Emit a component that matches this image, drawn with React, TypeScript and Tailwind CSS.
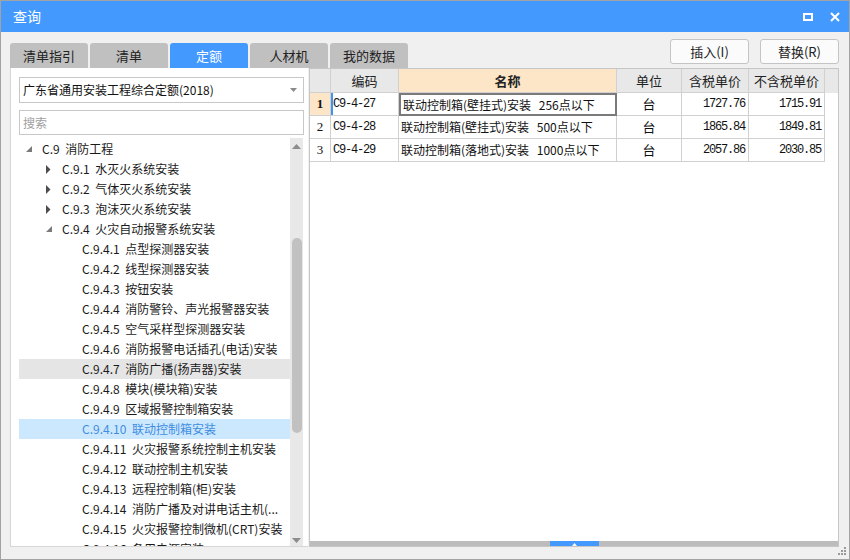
import React from "react";

type Node = { level: 0 | 1 | 2; arrow?: "open" | "closed"; text: string };

const tree: Node[] = [
  { level: 0, arrow: "open", text: "C.9 消防工程" },
  { level: 1, arrow: "closed", text: "C.9.1 水灭火系统安装" },
  { level: 1, arrow: "closed", text: "C.9.2 气体灭火系统安装" },
  { level: 1, arrow: "closed", text: "C.9.3 泡沫灭火系统安装" },
  { level: 1, arrow: "open", text: "C.9.4 火灾自动报警系统安装" },
  { level: 2, text: "C.9.4.1 点型探测器安装" },
  { level: 2, text: "C.9.4.2 线型探测器安装" },
  { level: 2, text: "C.9.4.3 按钮安装" },
  { level: 2, text: "C.9.4.4 消防警铃、声光报警器安装" },
  { level: 2, text: "C.9.4.5 空气采样型探测器安装" },
  { level: 2, text: "C.9.4.6 消防报警电话插孔(电话)安装" },
  { level: 2, text: "C.9.4.7 消防广播(扬声器)安装" },
  { level: 2, text: "C.9.4.8 模块(模块箱)安装" },
  { level: 2, text: "C.9.4.9 区域报警控制箱安装" },
  { level: 2, text: "C.9.4.10 联动控制箱安装" },
  { level: 2, text: "C.9.4.11 火灾报警系统控制主机安装" },
  { level: 2, text: "C.9.4.12 联动控制主机安装" },
  { level: 2, text: "C.9.4.13 远程控制箱(柜)安装" },
  { level: 2, text: "C.9.4.14 消防广播及对讲电话主机(..." },
  { level: 2, text: "C.9.4.15 火灾报警控制微机(CRT)安装" },
  { level: 2, text: "C.9.4.16 备用电源安装" },
];

const indent = { 0: "pl-[6px]", 1: "pl-[26px]", 2: "pl-[46px]" };

const rows = [
  { no: "1", code: "C9-4-27", name: "联动控制箱(壁挂式)安装 256点以下", unit: "台", tax: "1727.76", net: "1715.91" },
  { no: "2", code: "C9-4-28", name: "联动控制箱(壁挂式)安装 500点以下", unit: "台", tax: "1865.84", net: "1849.81" },
  { no: "3", code: "C9-4-29", name: "联动控制箱(落地式)安装 1000点以下", unit: "台", tax: "2057.86", net: "2030.85" },
];

const tabs = ["清单指引", "清单", "定额", "人材机", "我的数据"];

const ui = "font-['Noto_Sans_CJK_SC',sans-serif]";
const mono = "font-['Liberation_Mono','Noto_Sans_CJK_SC',monospace] tracking-[-1.2px]";

const TreeArrow = ({ kind }: { kind?: "open" | "closed" }) => (
  <span className="flex w-[17px] shrink-0 items-center">
    {kind === "open" && (
      <svg width="7" height="7" className="ml-[1px]">
        <polygon points="6,0 6,6 0,6" fill="#7a7a7a" />
      </svg>
    )}
    {kind === "closed" && (
      <svg width="6" height="9" className="ml-[1px]">
        <polygon points="0,0 4.5,4.5 0,9" fill="#4d4d4d" />
      </svg>
    )}
  </span>
);

export default function App() {
  return (
    <div className={`relative flex h-[560px] w-[850px] flex-col border border-[#a3a3a3] bg-[#f0f0f0] ${ui}`}>
      {/* title bar */}
      <div className="flex h-[31px] shrink-0 items-center justify-between bg-[#4499ff] pl-[12px] pr-[9px] text-white">
        <span className="text-[14px]">查询</span>
        <div className="flex items-center gap-[17px]">
          <span className="h-[8px] w-[10px] border-2 border-white" />
          <svg width="10" height="10" viewBox="0 0 10 10">
            <path d="M1 1 L9 9 M9 1 L1 9" stroke="#fff" strokeWidth="2" />
          </svg>
        </div>
      </div>

      {/* tabs + buttons */}
      <div className="flex h-[36px] shrink-0 justify-between pl-[9px] pr-[10px]">
        <div className="flex items-end gap-[2px]">
          {tabs.map((t) => (
            <div
              key={t}
              className={
                t === "定额"
                  ? "flex h-[25px] w-[78px] items-center justify-center rounded-t-[3px] bg-[#4499ff] text-[13px] text-white"
                  : "flex h-[25px] w-[78px] items-center justify-center rounded-t-[3px] bg-[#c0c0c0] text-[13px] text-[#222]"
              }
            >
              {t}
            </div>
          ))}
        </div>
        <div className="flex gap-[11px] pt-[7px]">
          <button className="h-[25px] w-[79px] rounded-[3px] border border-[#c4c4c4] bg-[#fbfbfb] text-[13px] text-[#222]">
            插入(I)
          </button>
          <button className="h-[25px] w-[79px] rounded-[3px] border border-[#c4c4c4] bg-[#fbfbfb] text-[13px] text-[#222]">
            替换(R)
          </button>
        </div>
      </div>

      {/* main */}
      <div className="flex h-[479px] shrink-0 gap-[1px] pl-[9px] pr-[10px]">
        {/* left */}
        <div className="flex w-[298px] flex-col border-b border-l border-[#d6d6d6] bg-white pl-[8px] pt-[9px]">
          <div className="flex h-[26px] w-[285px] items-center justify-between border border-[#c8c8c8] pl-[3px] pr-[6px] text-[12px] text-[#111]">
            <span>广东省通用安装工程综合定额(2018)</span>
            <svg width="7" height="4">
              <polygon points="0,0 7,0 3.5,4" fill="#8a8a8a" />
            </svg>
          </div>
          <div className="mt-[7px] flex h-[25px] w-[285px] items-center border border-[#c8c8c8] pl-[3px] text-[12px] text-[#a0a0a0]">
            搜索
          </div>
          <div className="mt-[3px] flex min-h-0 flex-1">
            <div className="w-[271px] overflow-hidden pt-[1px]">
              {tree.map((n) => {
                const hover = n.text.startsWith("C.9.4.7 ");
                const sel = n.text.startsWith("C.9.4.10 ");
                return (
                  <div
                    key={n.text}
                    className={`flex h-[20px] items-center whitespace-nowrap text-[12px] [word-spacing:3px] ${indent[n.level]} ${
                      sel ? "bg-[#cce8ff] text-[#3f8de0]" : hover ? "bg-[#e5e5e5] text-[#1a1a1a]" : "text-[#1a1a1a]"
                    }`}
                  >
                    <TreeArrow kind={n.arrow} />
                    <span>{n.text}</span>
                  </div>
                );
              })}
            </div>
            <div className="relative w-[13px] bg-[#e8e8e8]">
              <svg width="9" height="5" className="absolute left-[2px] top-[6px]">
                <polygon points="0,5 9,5 4.5,0" fill="#8c8c8c" />
              </svg>
              <div className="absolute left-[2px] top-[100px] h-[195px] w-[10px] rounded-full bg-[#c1c1c1]" />
              <svg width="9" height="5" className="absolute bottom-[3px] left-[2px]">
                <polygon points="0,0 9,0 4.5,5" fill="#8c8c8c" />
              </svg>
            </div>
          </div>
        </div>

        {/* right */}
        <div className="flex w-[530px] flex-col border border-[#c6c6c6] bg-white">
          <div className="flex-1 text-[12px] text-[#111]">
            <div className="flex h-[24px] bg-[#e8e8e8] text-[13px] text-[#222]">
              <div className="w-[21px] border-b border-r border-[#d0d0d0]" />
              <div className="flex w-[68px] items-center justify-center border-b border-r border-[#d0d0d0]">编码</div>
              <div className="flex w-[218px] items-center justify-center border-b border-r border-[#d0d0d0] bg-[#fde6c8] font-bold">
                名称
              </div>
              <div className="flex w-[65px] items-center justify-center border-b border-r border-[#d0d0d0]">单位</div>
              <div className="flex w-[67px] items-center justify-center border-b border-r border-[#d0d0d0]">含税单价</div>
              <div className="flex w-[76px] items-center justify-center border-b border-r border-[#d0d0d0]">不含税单价</div>
            </div>
            {rows.map((r, i) => {
              const active = i === 0;
              return (
                <div key={r.no} className="flex h-[23px]">
                  <div
                    className={`flex w-[21px] items-center justify-center border-b border-r border-[#d0d0d0] font-['Liberation_Serif',serif] text-[13px] ${
                      active ? "bg-[#fde6c8] font-bold" : ""
                    }`}
                  >
                    {r.no}
                  </div>
                  <div
                    className={`flex w-[68px] items-center border-b border-r border-[#d0d0d0] pl-[2px] ${mono} ${
                      active ? "shadow-[inset_2px_0_0_#3c95f5]" : ""
                    }`}
                  >
                    {r.code}
                  </div>
                  <div
                    className={`flex w-[218px] items-center whitespace-nowrap pl-[2px] [word-spacing:5px] ${
                      active ? "border-2 border-[#7a7a7a]" : "border-b border-r border-[#d0d0d0]"
                    }`}
                  >
                    {r.name}
                  </div>
                  <div className="flex w-[65px] items-center justify-center border-b border-r border-[#d0d0d0] text-[13px]">
                    {r.unit}
                  </div>
                  <div className={`flex w-[67px] items-center justify-end border-b border-r border-[#d0d0d0] pr-[3px] ${mono}`}>
                    {r.tax}
                  </div>
                  <div className={`flex w-[76px] items-center justify-end border-b border-r border-[#d0d0d0] pr-[3px] ${mono}`}>
                    {r.net}
                  </div>
                </div>
              );
            })}
          </div>
          <div className="flex h-[5px] shrink-0 bg-[#bcbcbc] pl-[240px]">
            <div className="flex h-[5px] w-[49px] items-end justify-center bg-[#4499ff]">
              <svg width="5" height="3">
                <polygon points="0,3 5,3 2.5,0" fill="#fff" />
              </svg>
            </div>
          </div>
        </div>
      </div>

      {/* resize grip */}
      <svg width="9" height="9" className="absolute bottom-[3px] right-[2px]">
        <rect x="6" y="0" width="2" height="2" fill="#9a9a9a" />
        <rect x="3" y="3" width="2" height="2" fill="#9a9a9a" />
        <rect x="6" y="3" width="2" height="2" fill="#9a9a9a" />
        <rect x="0" y="6" width="2" height="2" fill="#9a9a9a" />
        <rect x="3" y="6" width="2" height="2" fill="#9a9a9a" />
        <rect x="6" y="6" width="2" height="2" fill="#9a9a9a" />
      </svg>
    </div>
  );
}
